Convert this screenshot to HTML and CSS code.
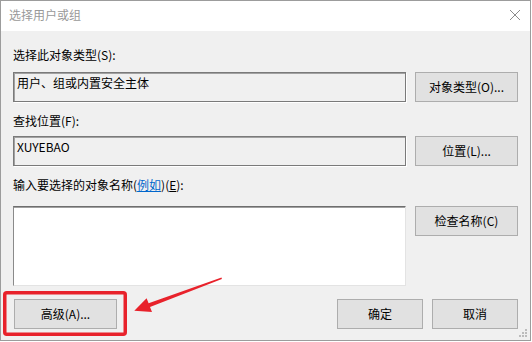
FILE: index.html
```html
<!DOCTYPE html>
<html lang="zh-CN">
<head>
    <meta charset="UTF-8">
    <title>选择用户或组</title>
    <link rel="stylesheet" href="styles.css">
</head>
<body>
    <div class="window">
        <div class="titlebar">
            <span class="title">选择用户或组</span>
            <svg class="close" width="12" height="12" viewBox="0 0 12 12">
                <path d="M1 1 L11 11 M11 1 L1 11" stroke="#8c8c8c" stroke-width="1" fill="none"/>
            </svg>
        </div>

        <div class="content">
            <div class="label label-first">选择此对象类型(S):</div>
            <div class="row">
                <div class="field">用户、组或内置安全主体</div>
                <button class="btn">对象类型(O)...</button>
            </div>

            <div class="label">查找位置(F):</div>
            <div class="row row-tight">
                <div class="field">XUYEBAO</div>
                <button class="btn">位置(L)...</button>
            </div>

            <div class="label">输入要选择的对象名称(<a href="#" class="link">例如</a>)(<u>E</u>):</div>
            <div class="row row-names">
                <div class="names"></div>
                <button class="btn">检查名称(C)</button>
            </div>

            <div class="footer">
                <button class="btn btn-advanced">高级(A)...</button>
                <div class="footer-right">
                    <button class="btn btn-small">确定</button>
                    <button class="btn btn-small">取消</button>
                </div>
            </div>
        </div>

        <svg class="grip" width="10" height="10" viewBox="0 0 10 10">
            <rect x="6" y="0" width="2" height="2" fill="#bcbcbc"/>
            <rect x="3" y="3" width="2" height="2" fill="#bcbcbc"/>
            <rect x="6" y="3" width="2" height="2" fill="#bcbcbc"/>
            <rect x="0" y="6" width="2" height="2" fill="#bcbcbc"/>
            <rect x="3" y="6" width="2" height="2" fill="#bcbcbc"/>
            <rect x="6" y="6" width="2" height="2" fill="#bcbcbc"/>
        </svg>
    </div>

    <!-- 标注：红框和箭头 -->
    <svg class="marks" width="532" height="342" viewBox="0 0 532 342">
        <rect x="4.75" y="292.75" width="120.5" height="41.5" rx="2" fill="none" stroke="#e8222b" stroke-width="3.5"/>
        <polygon points="221.5,277.6 148.6,303.2 146.6,298.2 134.3,310.7 152,312 150,307 221.9,279" fill="#e8222b"/>
    </svg>
</body>
</html>
```

FILE: styles.css
```css
body {
    margin: 0;
    background: #ffffff;
    font-family: "Noto Sans CJK SC", "Liberation Sans", sans-serif;
    font-size: 12px;
    color: #000;
}

.window {
    position: relative;
    width: 531px;
    height: 341px;
    box-sizing: border-box;
    border: 1px solid #9c9c9c;
    background-color: #f0f0f0;
    display: flex;
    flex-direction: column;
}

.titlebar {
    height: 30px;
    background-color: #ffffff;
    display: flex;
    align-items: center;
    justify-content: space-between;
    padding: 0 8px 2px 8px;
    box-sizing: border-box;
}

.title {
    color: #999999;
    font-size: 12px;
    line-height: 16px;
}

.close {
    display: block;
    margin-right: 1px;
}

.content {
    padding: 16px 12px 0 12px;
    display: flex;
    flex-direction: column;
}

.label {
    line-height: 16px;
    margin-top: 11px;
    white-space: nowrap;
}

.label-first {
    margin-top: 0;
}

.link {
    color: #0066cc;
    text-decoration: underline;
}

.row {
    display: grid;
    grid-template-columns: 393px 103px;
    column-gap: 9px;
    align-items: start;
    margin-top: 9px;
}

.row-tight {
    margin-top: 7px;
}

.row-names {
    margin-top: 13px;
}

.field {
    height: 30px;
    box-sizing: border-box;
    border: 1px solid #7a7a7a;
    box-shadow: inset 1px 1px 0 #a2a2a2, 1px 1px 0 #ffffff;
    padding: 2px 3px;
    line-height: 16px;
    white-space: nowrap;
}

.names {
    height: 80px;
    box-sizing: border-box;
    background-color: #ffffff;
    border: 1px solid;
    border-color: #6e6e6e #e3e3e3 #e3e3e3 #8a8a8a;
    box-shadow: inset 0 1px 0 #a0a0a0;
}

.btn {
    height: 30px;
    box-sizing: border-box;
    background-color: #e1e1e1;
    border: 1px solid #adadad;
    font-family: inherit;
    font-size: 12px;
    color: #000;
    padding: 0;
    line-height: 16px;
    white-space: nowrap;
}

.footer {
    display: flex;
    justify-content: space-between;
    margin-top: 13px;
}

.btn-advanced {
    width: 103px;
    margin-left: 1px;
}

.footer-right {
    display: flex;
    gap: 9px;
}

.btn-small {
    width: 86px;
}

.grip {
    position: absolute;
    right: 1px;
    bottom: 1px;
}

.marks {
    position: absolute;
    left: 0;
    top: 0;
    pointer-events: none;
}
```
